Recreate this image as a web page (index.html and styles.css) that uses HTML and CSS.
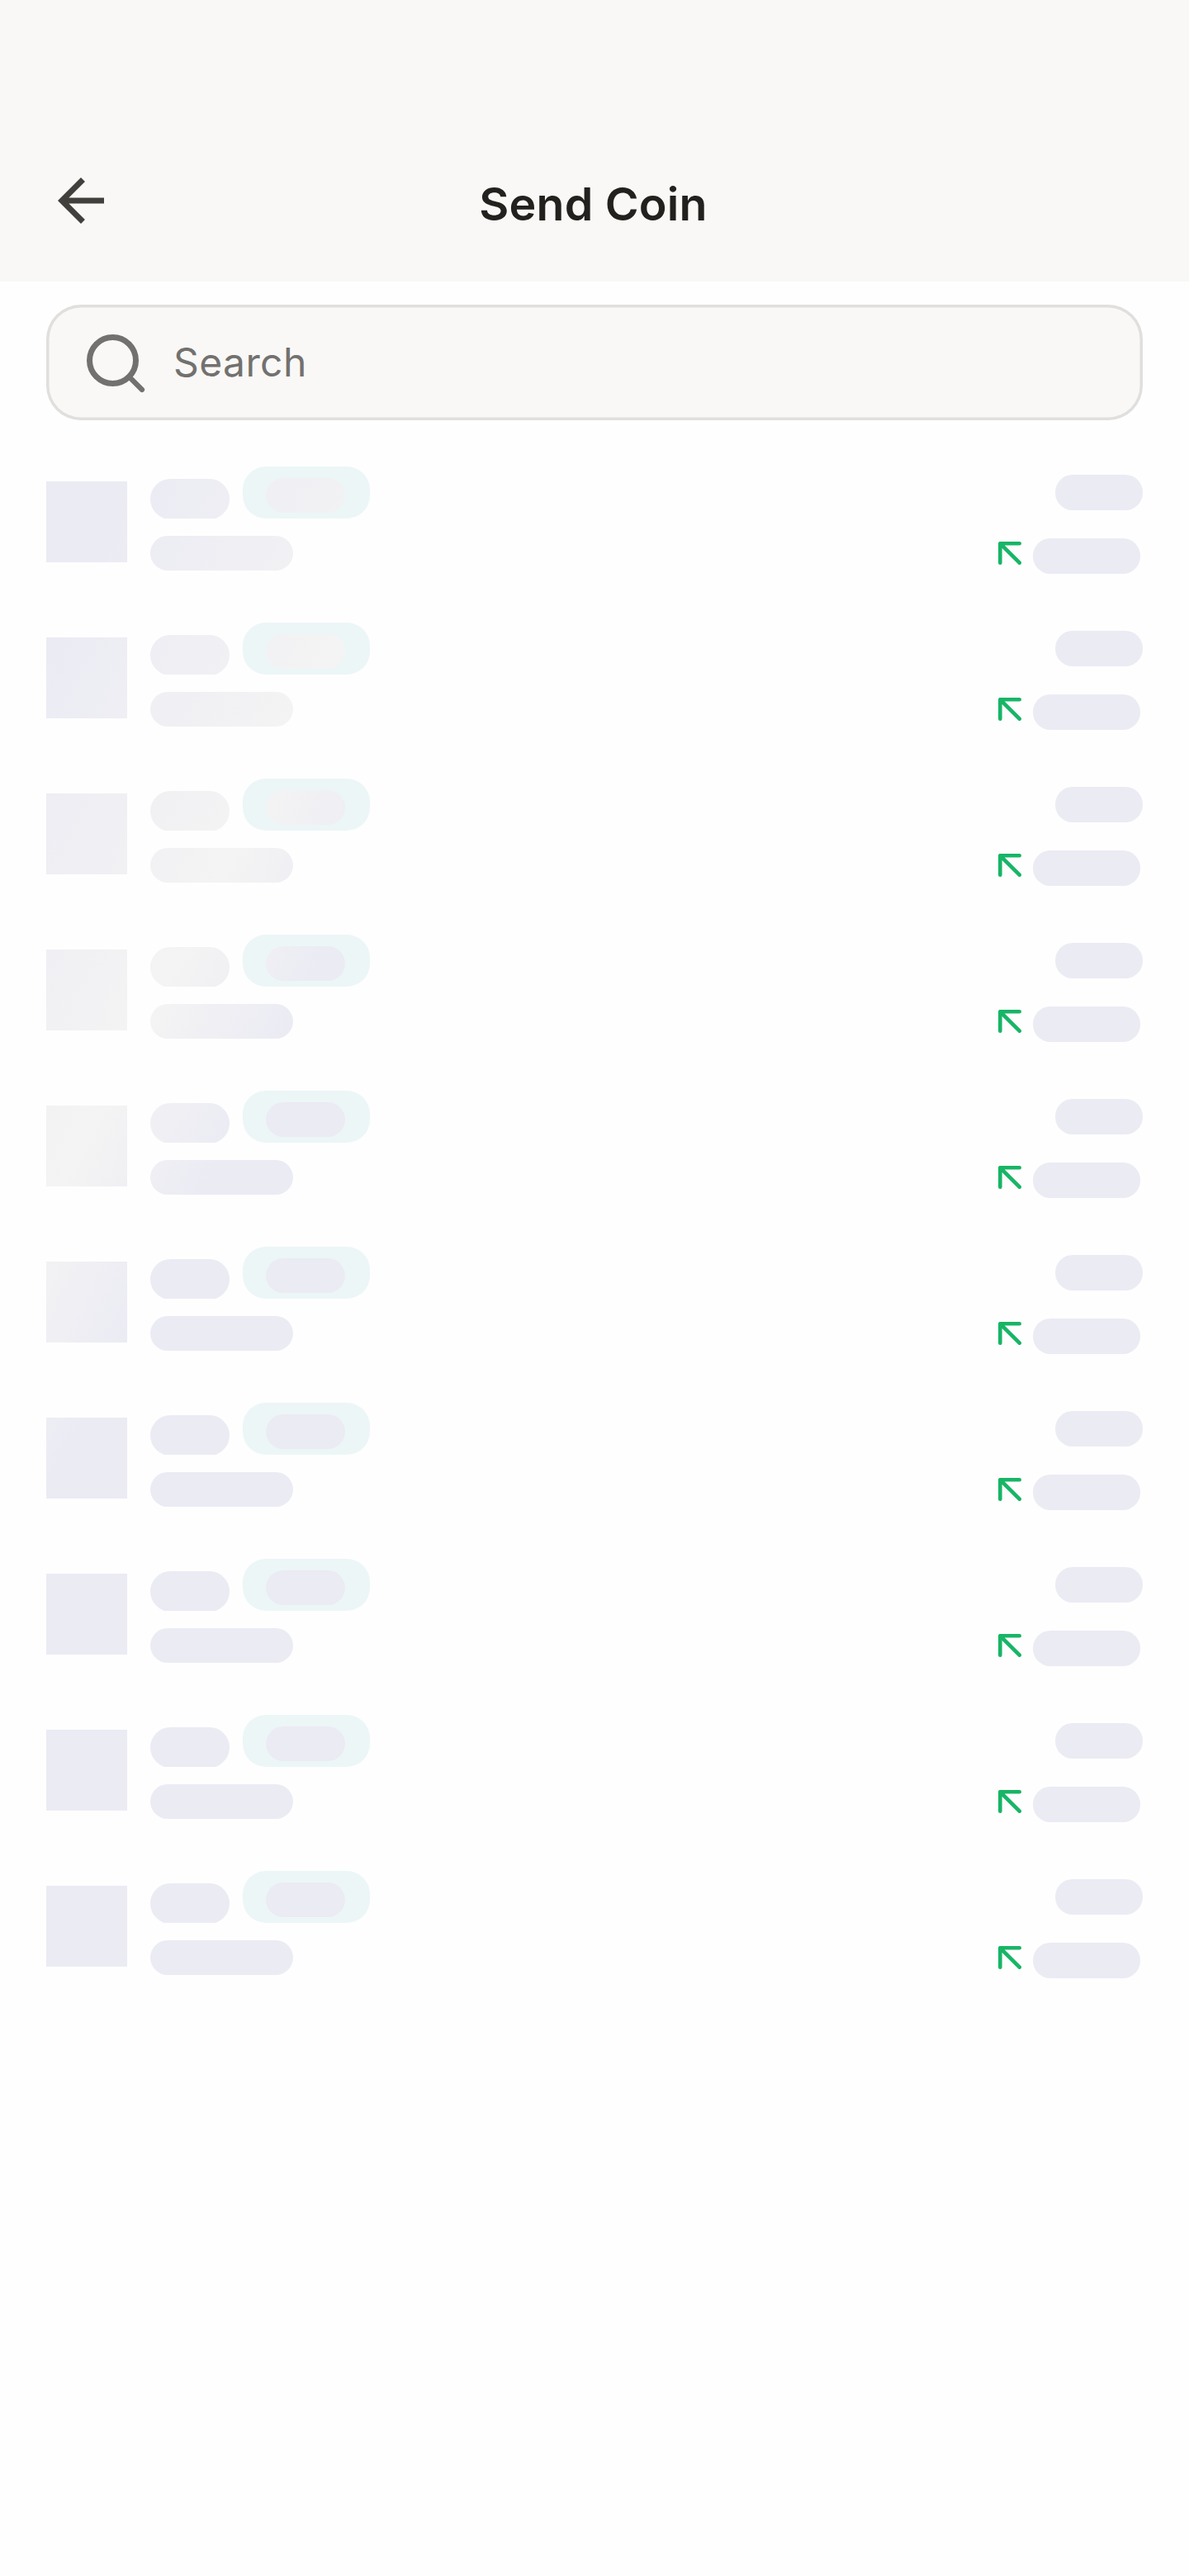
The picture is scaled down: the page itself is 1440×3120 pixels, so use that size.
FILE: index.html
```html
<!DOCTYPE html>
<html lang="en">
<head>
<meta charset="utf-8">
<title>Send Coin</title>
<link rel="stylesheet" href="styles.css">
</head>
<body>
<header class="header">
  <svg class="back" viewBox="0 0 24 24" aria-label="Back"><path d="M20 11H7.83l5.59-5.59L12 4l-8 8 8 8 1.41-1.41L7.83 13H20z"/></svg>
  <h1 class="title">Send Coin</h1>
</header>
<main class="content">
  <div class="search">
    <svg class="search-icon" viewBox="0 0 84 84"><circle cx="38.5" cy="38.5" r="28"/><path d="M58.5 58.5L74 74"/></svg>
    <span class="search-text">Search</span>
  </div>
  <div class="list" id="list"></div>
</main>
<template id="row">
  <div class="row">
    <div class="bone avatar"></div>
    <div class="info">
      <div class="info-top">
        <div class="name-clip"><div class="bone name"></div></div>
        <div class="badge"><div class="bone badge-text"></div></div>
      </div>
      <div class="bone subtitle"></div>
    </div>
    <div class="amounts">
      <div class="bone amount"></div>
      <div class="change">
        <svg class="trend" viewBox="0 0 28 28"><path d="M2.3 25.7V2.3H25.7M2.3 2.3L25.7 25.7"/></svg>
        <div class="bone percent"></div>
      </div>
    </div>
  </div>
</template>
<script src="script.js"></script>
</body>
</html>
```
FILE: styles.css
```css
* { box-sizing: border-box; }
body {
  margin: 0;
  min-height: 3120px;
  background: #fefefe;
  font-family: Inter, "Liberation Sans", sans-serif;
}
.header {
  display: grid;
  grid-template-columns: 84px 1fr 84px;
  height: 341px;
  padding: 201px 56px 0;
  background: #f9f8f6;
}
.back { width: 84px; height: 84px; fill: #41403d; }
.title {
  margin: 4px 0 0 -3px;
  font-size: 55.5px;
  line-height: 84px;
  font-weight: 600;
  letter-spacing: 0.2px;
  text-align: center;
  white-space: nowrap;
  color: #23211e;
}
.content { padding: 28px 56px 0; }
.search {
  display: flex;
  align-items: center;
  height: 140px;
  padding-left: 42px;
  border-radius: 42px;
  background: #f9f8f6;
  box-shadow: inset 0 0 0 3.5px #e0dfde;
}
.search-icon {
  width: 84px;
  height: 84px;
  margin-top: 1px;
  fill: none;
  stroke: #72716f;
  stroke-width: 7;
  stroke-linecap: round;
}
.search-icon path { stroke-width: 6.2; }
.search-text {
  margin-left: 28px;
  font-size: 48px;
  line-height: 60px;
  letter-spacing: 0.4px;
  color: #72716f;
}
.list { padding-top: 56px; }
.row {
  display: flex;
  align-items: flex-start;
  height: 189px;
}
/* One shimmer sweep shared by every placeholder on the screen */
.bone {
  background: linear-gradient(117.5deg, #ebebf4 418px, #f4f4f4 728px, #ebebf4 883px) fixed;
}
.avatar { width: 98px; height: 98px; margin-top: 18px; }
.info { margin-left: 28px; }
.info-top { display: flex; align-items: flex-end; gap: 16px; }
.name-clip { height: 48px; overflow: hidden; }
.name { width: 96px; height: 49px; border-radius: 24.5px; }
.badge {
  height: 63px;
  padding: 14px 30px 0 28px;
  width: 154px;
  border-radius: 28px;
  background: #ecf6f7;
}
.badge-text { width: 96px; height: 42px; border-radius: 21px; }
.subtitle { width: 173px; height: 42px; margin-top: 21px; border-radius: 21px; }
.amounts {
  display: flex;
  flex-direction: column;
  align-items: flex-end;
  margin-left: auto;
  padding-top: 10px;
}
.amount { width: 106px; height: 43px; border-radius: 21px; }
.change { display: flex; align-items: flex-start; gap: 14px; margin: 34px 3px 0 0; }
.trend {
  width: 28px;
  height: 28px;
  margin-top: 4px;
  fill: none;
  stroke: #18b566;
  stroke-width: 4.6;
  stroke-linecap: round;
  stroke-linejoin: round;
}
.percent { width: 130px; height: 43px; border-radius: 21px; }
```
FILE: script.js
```js
const list = document.getElementById("list");
const row = document.getElementById("row");
for (let i = 0; i < 10; i++) {
  list.appendChild(row.content.cloneNode(true));
}
```
